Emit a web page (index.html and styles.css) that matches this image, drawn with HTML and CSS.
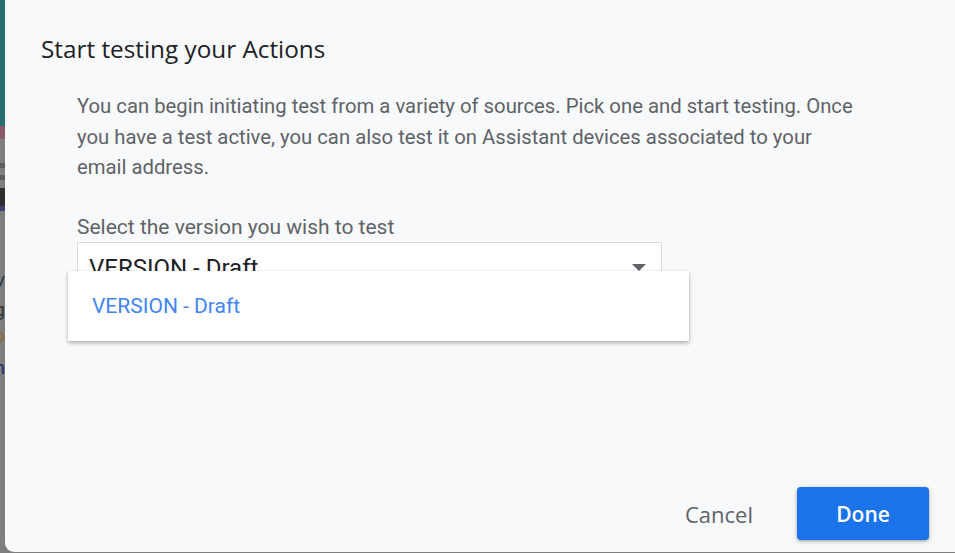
FILE: index.html
```html
<!DOCTYPE html>
<html>
<head>
<meta charset="utf-8">
<link rel="stylesheet" href="styles.css">
</head>
<body>
<div class="page">
  <div class="backdrop">
    <div class="bd-teal"></div>
    <div class="bd-pink"></div>
    <div class="bd-grey g1"></div>
    <div class="bd-bar"></div>
    <div class="bd-grey g2"></div>
    <div class="bd-bar"></div>
    <div class="bd-grey g3"></div>
    <div class="bd-dark"></div>
    <div class="bd-blue"></div>
    <div class="bd-grey bd-text">
      <span class="t1">v</span>
      <span class="t2">g</span>
      <span class="t3">o</span>
      <span class="t4">n</span>
    </div>
  </div>
  <div class="dialog">
    <h1 class="title">Start testing your Actions</h1>
    <div class="content">
      <p class="intro">You can begin initiating test from a variety of sources. Pick one and start testing. Once you have a test active, you can also test it on Assistant devices associated to your email address.</p>
      <label class="label">Select the version you wish to test</label>
      <div class="select-wrap">
        <div class="select">
          <span class="select-value">VERSION - Draft</span>
          <svg class="arrow" width="14" height="7" viewBox="0 0 14 7"><path d="M0 0h14L7 7z" fill="#5f6368"/></svg>
        </div>
        <div class="menu">
          <div class="menu-item">VERSION - Draft</div>
        </div>
      </div>
    </div>
    <div class="actions">
      <button class="btn-cancel">Cancel</button>
      <button class="btn-done">Done</button>
    </div>
  </div>
</div>
</body>
</html>
```

FILE: styles.css
```css
* { box-sizing: border-box; }
html, body { margin: 0; padding: 0; }
body {
  width: 955px;
  height: 553px;
  overflow: hidden;
  background: #7d7d7d;
  font-family: Roboto, "Liberation Sans", sans-serif;
}
.page {
  display: flex;
  height: 553px;
}
.backdrop {
  width: 5px;
  flex: none;
  display: flex;
  flex-direction: column;
  background: #7e7e7e;
}
.bd-teal { height: 126px; background: #276d72; }
.bd-pink { height: 13px; background: #8a5a6c; }
.bd-grey { background: #7e7e7e; }
.g1 { height: 24px; }
.g2 { height: 7px; }
.g3 { height: 8px; }
.bd-bar { height: 5px; background: #5e5e5e; }
.bd-dark { height: 18px; background: #2e2e2e; }
.bd-blue { height: 5px; background: #3e3f6e; }
.bd-text {
  flex: 1;
  position: relative;
  overflow: hidden;
  font-size: 19px;
  line-height: 1;
}
.bd-text span { position: absolute; right: 0; }
.t1 { top: 59px; color: #2a3550; }
.t2 { top: 89px; color: #333; }
.t3 { top: 115px; color: #8a6a2a; }
.t4 { top: 147px; color: #1d2d6e; }

.dialog {
  flex: 1;
  height: 552px;
  background: #f8f9fa;
  border-radius: 0 0 0 9px;
  display: flex;
  flex-direction: column;
  padding: 34px 26px 12px 36px;
}
.title {
  margin: 0;
  font-family: "Open Sans", Roboto, sans-serif;
  font-weight: 400;
  font-size: 24.3px;
  line-height: 30px;
  color: #202124;
}
.content {
  padding-left: 36px;
  padding-top: 27px;
  flex: 1;
}
.intro {
  margin: 0;
  font-size: 20.3px;
  line-height: 30.5px;
  color: #5f6368;
  width: 780px;
}
.label {
  display: block;
  margin-top: 32px;
  font-size: 21px;
  line-height: 24px;
  color: #5f6368;
}
.select-wrap {
  position: relative;
  margin-top: 3px;
}
.select {
  width: 585px;
  height: 50px;
  background: #fff;
  border: 1px solid #dadce0;
  display: flex;
  align-items: center;
  justify-content: space-between;
  padding: 0 15px 0 11px;
}
.select-value {
  font-size: 24px;
  color: #202124;
  margin-top: 2px;
}
.arrow { margin-top: 2px; }
.menu {
  position: absolute;
  left: -9px;
  top: 29px;
  width: 621px;
  height: 70px;
  background: #fff;
  box-shadow: 0 2px 4px rgba(0,0,0,0.3), 0 0 1px rgba(0,0,0,0.1);
  display: flex;
  align-items: center;
  padding-left: 24px;
}
.menu-item {
  font-size: 21px;
  color: #4285f4;
}
.actions {
  display: flex;
  justify-content: flex-end;
  align-items: center;
  gap: 44px;
}
.btn-cancel {
  background: none;
  border: none;
  font-family: "Open Sans", Roboto, sans-serif;
  font-size: 22px;
  color: #5f6368;
  padding: 0;
}
.btn-done {
  width: 132px;
  height: 53px;
  border: none;
  border-radius: 4px;
  background: #1a73e8;
  color: #fff;
  font-family: "Open Sans", Roboto, sans-serif;
  font-weight: 600;
  font-size: 21px;
  box-shadow: 0 1px 3px rgba(0,0,0,0.3), 0 2px 6px rgba(60,64,67,0.15);
}
```
